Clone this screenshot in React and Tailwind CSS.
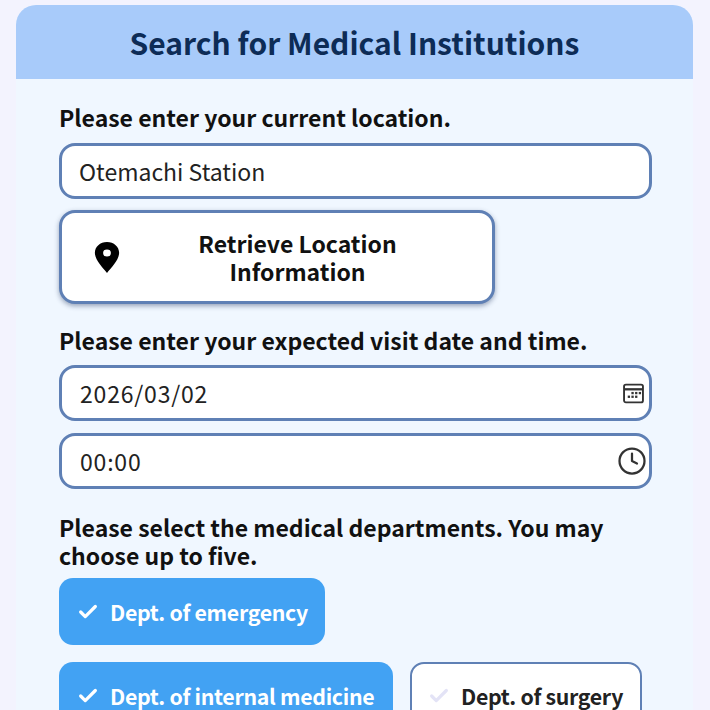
import { Check, Clock } from "lucide-react";

function PinIcon() {
  return (
    <svg viewBox="0 0 24 34" className="w-[26px] h-[33px]" preserveAspectRatio="none">
      <path
        fillRule="evenodd"
        d="M12 1C5.600 1 .8 5.900.8 12.200.8 19.600 8.400 27.600 12 33c3.600-5.400 11.200-13.400 11.200-20.800C23.200 5.900 18.400 1 12 1zm0 7.800a3.600 3.600 0 1 1 0 7.200 3.600 3.600 0 0 1 0-7.200z"
        fill="#000"
      />
    </svg>
  );
}

function CalendarIcon() {
  return (
    <svg viewBox="0 0 20 20" className="w-[21px] h-[21px]" fill="none">
      <rect x="1" y="1.500" width="18" height="17" rx="1.800" stroke="#333" strokeWidth="1.800" />
      <path d="M1.500 6h17" stroke="#333" strokeWidth="2.200" />
      <g fill="#333">
        <rect x="8" y="8.500" width="2.200" height="2.200" />
        <rect x="11.500" y="8.500" width="2.200" height="2.200" />
        <rect x="15" y="8.500" width="2.200" height="2.200" />
        <rect x="4.500" y="12" width="2.200" height="2.200" />
        <rect x="8" y="12" width="2.200" height="2.200" />
        <rect x="11.500" y="12" width="2.200" height="2.200" />
      </g>
    </svg>
  );
}

function Field({ value, icon }) {
  return (
    <div className="h-[56px] w-[593px] flex items-center justify-between bg-white border-[3px] border-[#5f80b5] rounded-[16px] pl-[18px] pr-[2px] text-[23px] text-[#222] tracking-[0.8px]">
      <span>{value}</span>
      {icon}
    </div>
  );
}

function Chip({ label, on, width }) {
  return (
    <div
      className={
        on
          ? "h-[67px] flex items-center rounded-[14px] bg-[#42a2f3] text-white pl-[18px] gap-[11px] shrink-0"
          : "h-[67px] flex items-center rounded-[14px] bg-white border-2 border-[#5f80b5] text-[#222] pl-[16px] gap-[11px] shrink-0"
      }
      style={{ width }}
    >
      <Check className={on ? "size-[22px] text-white" : "size-[22px] text-[#e3e3f6]"} strokeWidth={3.5} />
      <span className="text-[21.3px] font-bold tracking-[-0.3px]">{label}</span>
    </div>
  );
}

export default function App() {
  return (
    <div className="h-screen overflow-hidden bg-[#f3f3fe] px-[16px] pt-[5px] font-['Noto_Sans_CJK_JP','Noto_Sans',sans-serif] leading-none">
      <div className="w-[677px] rounded-t-[20px] overflow-hidden bg-[#f0f7ff]">
        {/* Header */}
        <div className="h-[74px] bg-[#a8cbfa] flex items-center justify-center">
          <h1 className="text-[30px] font-bold text-[#0d2c56]">Search for Medical Institutions</h1>
        </div>

        <div className="pl-[43px] pt-[27px]">
          <p className="text-[23px] font-bold text-[#111] h-[37px]">Please enter your current location.</p>
          <div className="h-[56px] w-[593px] flex items-center bg-white border-[3px] border-[#5f80b5] rounded-[16px] pl-[17px] pt-[1px] text-[23px] text-[#222]">
            Otemachi Station
          </div>

          <button className="mt-[11px] w-[436px] h-[94px] flex items-center bg-white border-[3px] border-[#5f80b5] rounded-[16px] shadow-[0_2px_5px_rgba(40,60,100,0.45)] pl-[32px] pr-[17px] text-[#111]">
            <PinIcon />
            <span className="flex-1 text-center text-[23px] font-bold leading-[28px]">
              Retrieve Location
              <br />
              Information
            </span>
          </button>

          <p className="mt-[25px] text-[23px] font-bold text-[#111] h-[36px]">
            Please enter your expected visit date and time.
          </p>
          <div className="flex flex-col gap-[12px]">
            <Field value="2026/03/02" icon={<span className="mr-[3px] flex"><CalendarIcon /></span>} />
            <Field value="00:00" icon={<Clock className="size-[30px] text-[#333]" strokeWidth={1.800} />} />
          </div>

          <p className="mt-[24px] w-[593px] text-[23px] font-bold text-[#111] leading-[28px]">
            Please select the medical departments. You may choose up to five.
          </p>
          <div className="mt-[9px] flex flex-col gap-[17px]">
            <Chip label="Dept. of emergency" on width={266} />
            <div className="flex gap-[17px]">
              <Chip label="Dept. of internal medicine" on width={334} />
              <Chip label="Dept. of surgery" width={232} />
            </div>
          </div>
        </div>
      </div>
    </div>
  );
}
